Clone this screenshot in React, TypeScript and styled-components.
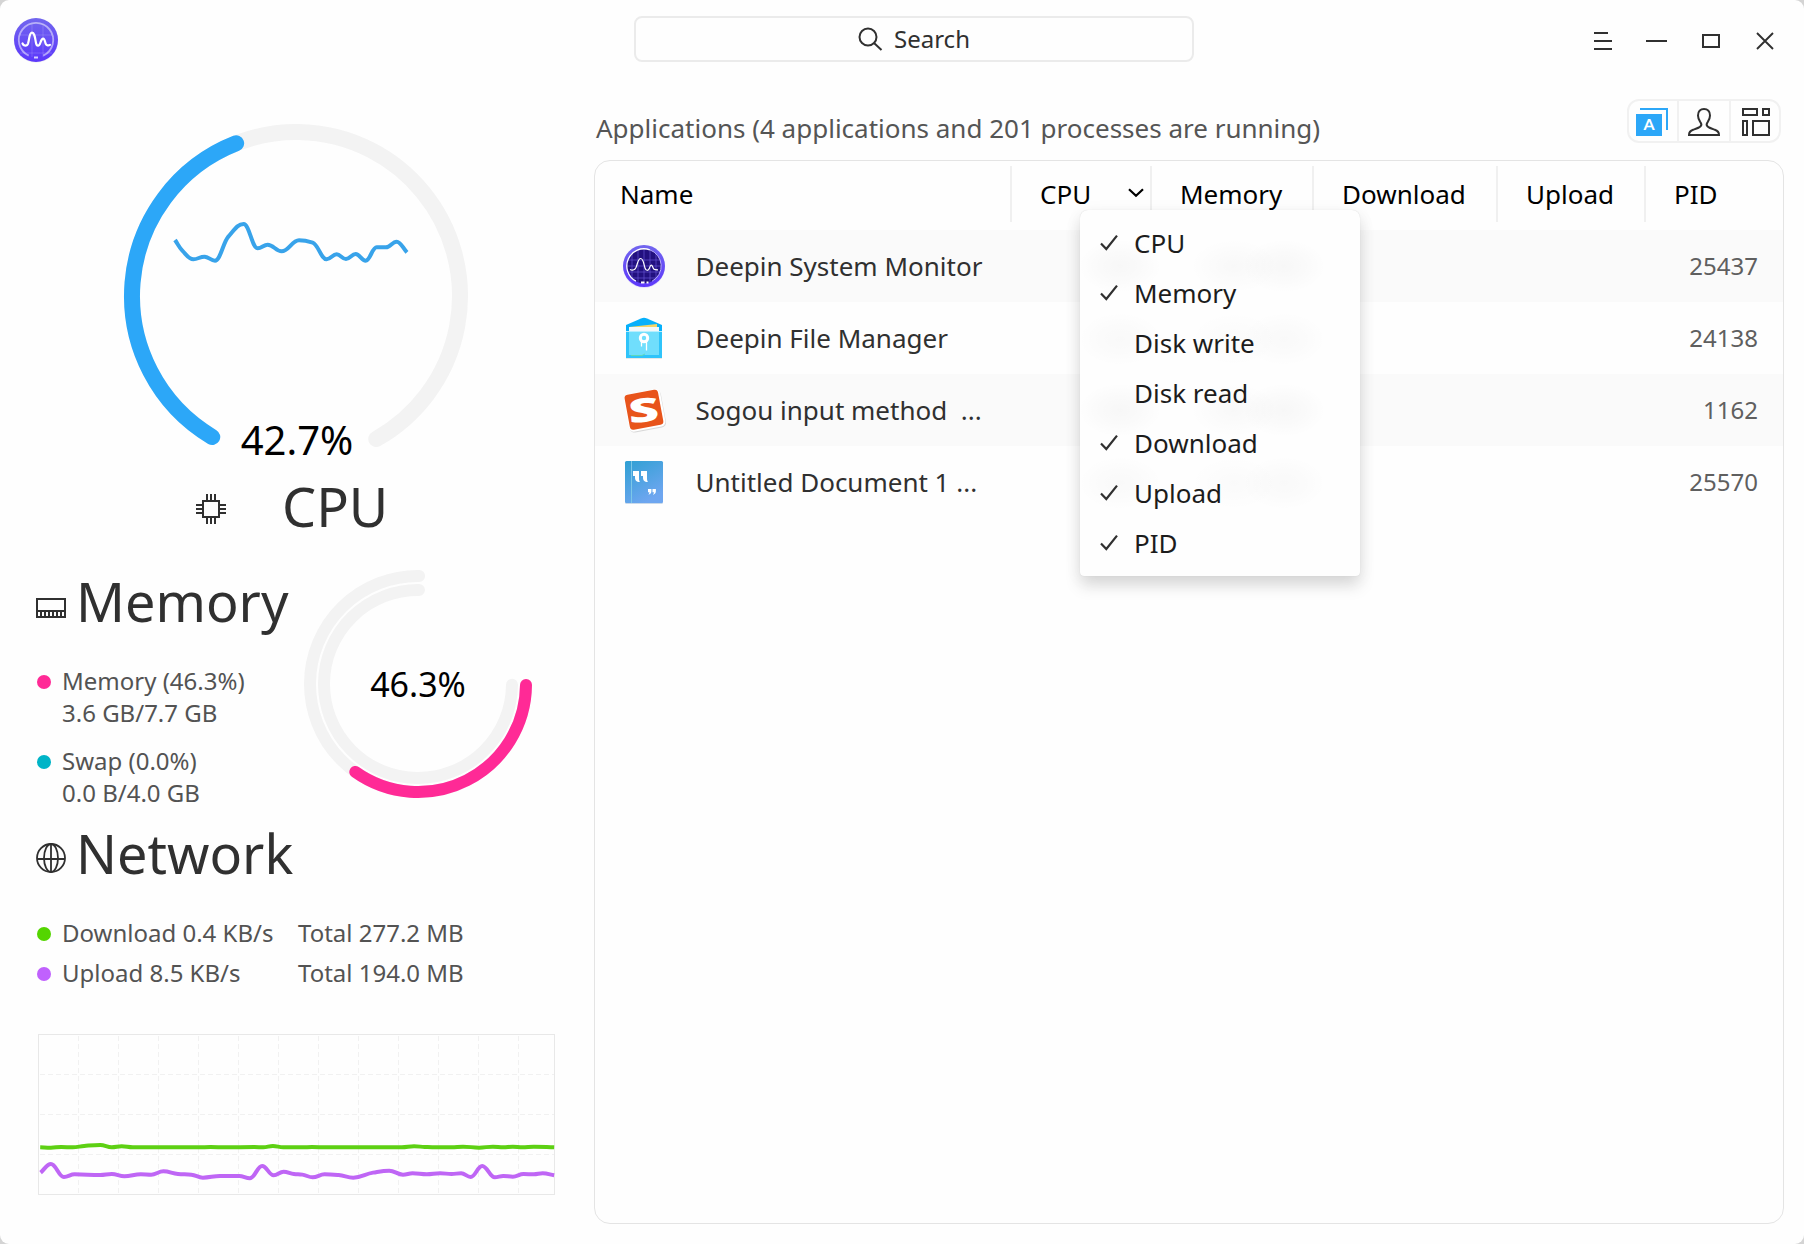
import React from "react";
import styled, { createGlobalStyle } from "styled-components";

const GlobalStyle = createGlobalStyle`
  html, body { margin: 0; padding: 0; background: #d4d4d4; }
  * { box-sizing: border-box; }
  body { font-family: "Noto Sans", "Open Sans", sans-serif; }
  svg { display: block; flex: none; overflow: visible; }
`;

/* ---------- curve helpers ---------- */

type Point = [number, number];

/** Monotone cubic path, so peaks stay on their samples. */
function smoothPath(pts: Point[]): string {
  const n = pts.length;
  const slope: number[] = [];
  for (let i = 0; i < n - 1; i++) {
    slope.push((pts[i + 1][1] - pts[i][1]) / (pts[i + 1][0] - pts[i][0]));
  }
  const tangent = pts.map((_, i) => {
    if (i === 0) return slope[0];
    if (i === n - 1) return slope[n - 2];
    const a = slope[i - 1];
    const b = slope[i];
    return a * b <= 0 ? 0 : (2 * a * b) / (a + b);
  });
  let d = `M${pts[0][0]} ${pts[0][1]}`;
  for (let i = 0; i < n - 1; i++) {
    const h = (pts[i + 1][0] - pts[i][0]) / 2.5;
    d += `C${pts[i][0] + h} ${pts[i][1] + tangent[i] * h} ${pts[i + 1][0] - h} ${
      pts[i + 1][1] - tangent[i + 1] * h
    } ${pts[i + 1][0]} ${pts[i + 1][1]}`;
  }
  return d;
}

/** Clockwise arc, angles in degrees from the positive x axis. */
function arc(cx: number, cy: number, r: number, from: number, to: number): string {
  const at = (a: number) => {
    const t = (a * Math.PI) / 180;
    return `${(cx + r * Math.cos(t)).toFixed(2)} ${(cy + r * Math.sin(t)).toFixed(2)}`;
  };
  return `M${at(from)}A${r} ${r} 0 ${to - from > 180 ? 1 : 0} 1 ${at(to)}`;
}

/* ---------- data ---------- */

const cpuHistory: Point[] = [
  [30, 90], [52, 122], [85, 148], [118, 140], [150, 152], [190, 80], [236, 42], [278, 115], [308, 104],
  [350, 124], [402, 91], [443, 98], [485, 148], [515, 133], [543, 147], [572, 132], [602, 152],
  [635, 112], [663, 112], [695, 95], [726, 127],
].map(([x, y]) => [x / 3 + 41, y / 3 + 86] as Point);

const toChart = ([x, y]: number[]): Point => [x / 2.613 - 38, y / 3 - 33.7];

const uploadHistory: Point[] = [
  [106, 517], [133, 491], [167, 530], [195, 522], [262, 524], [292, 521], [325, 528], [368, 522],
  [395, 523], [427, 513], [465, 521], [500, 523], [530, 532], [575, 527], [625, 527], [653, 534],
  [685, 497], [715, 525], [741, 514], [768, 521], [790, 523], [817, 531], [848, 522], [885, 524],
  [923, 532], [975, 517], [1017, 511], [1053, 523], [1078, 519], [1115, 522], [1150, 519],
  [1180, 521], [1205, 519], [1230, 530], [1260, 497], [1293, 531], [1315, 527], [1340, 529],
  [1368, 521], [1395, 522], [1418, 519], [1448, 525],
].map(toChart);

const downloadHistory: Point[] = [
  [105, 441], [133, 442], [160, 440], [190, 441], [220, 437], [262, 434], [292, 441], [318, 438],
  [347, 441], [520, 441], [550, 440], [590, 441], [665, 440], [688, 441], [713, 437], [740, 441],
  [790, 441], [815, 440], [855, 441], [1050, 441], [1082, 438], [1110, 440], [1140, 441],
  [1180, 441], [1210, 439], [1252, 442], [1288, 439], [1315, 441], [1340, 439], [1365, 441],
  [1395, 439], [1448, 441],
].map(toChart);

/* ---------- window ---------- */

const Window = styled.div`
  position: relative;
  display: flex;
  flex-direction: column;
  width: 1804px;
  height: 1244px;
  overflow: hidden;
  background: #fefefe;
  border-radius: 9px;
`;

const TitleBar = styled.header`
  display: grid;
  grid-template-columns: 634px 560px 1fr;
  align-items: start;
  height: 80px;
  padding-top: 16px;
`;

const LogoSlot = styled.div`
  padding: 0 0 0 12px;
`;

const SearchBox = styled.div`
  display: flex;
  align-items: center;
  justify-content: center;
  gap: 11px;
  height: 46px;
  border: 2px solid #ebebeb;
  border-radius: 8px;
  font-size: 24px;
  line-height: 32px;
  color: #303030;
`;

const WindowControls = styled.div`
  display: flex;
  justify-content: flex-end;
  height: 50px;
  padding-right: 12px;
`;

const ControlButton = styled.button`
  display: flex;
  align-items: center;
  justify-content: center;
  width: 54px;
  height: 50px;
  padding: 0;
  border: 0;
  background: none;
`;

const Body = styled.div`
  display: flex;
  flex: 1;
`;

/* ---------- sidebar ---------- */

const Sidebar = styled.aside`
  display: flex;
  flex-direction: column;
  width: 594px;
  padding-top: 44px;
`;

const Gauge = styled.div<{ $left?: number; $w: number; $h: number }>`
  display: grid;
  width: ${(p) => p.$w}px;
  height: ${(p) => p.$h}px;
  margin-left: ${(p) => p.$left ?? 0}px;
  > * { grid-area: 1 / 1; }
`;

const GaugeValue = styled.span<{ $size: number; $end?: boolean }>`
  place-self: ${(p) => (p.$end ? "end" : "center")} center;
  padding-left: ${(p) => (p.$end ? 2 : 0)}px;
  font-size: ${(p) => p.$size}px;
  line-height: 30px;
  color: #000;
`;

const Heading = styled.h2<{ $left: number; $gap: number; $top: number }>`
  display: flex;
  align-items: center;
  gap: ${(p) => p.$gap}px;
  height: 60px;
  margin: ${(p) => p.$top}px 0 0 ${(p) => p.$left}px;
  font-size: 54px;
  font-weight: 400;
  line-height: 60px;
  color: #303030;
`;

const HeadingIcon = styled.span<{ $drop: number }>`
  display: block;
  margin-top: ${(p) => p.$drop}px;
`;

const MemorySection = styled.section`
  display: flex;
  height: 273px;
`;

const MemoryInfo = styled.div`
  width: 304px;
`;

const MemoryRing = styled.div`
  padding-top: 34px;
`;

const Legend = styled.ul<{ $gap: number }>`
  display: flex;
  flex-direction: column;
  gap: ${(p) => p.$gap}px;
  margin: 34px 0 0;
  padding: 0 0 0 37px;
  list-style: none;
  font-size: 24px;
  line-height: 32px;
  color: #535353;
`;

const LegendItem = styled.li`
  display: flex;
  white-space: nowrap;
`;

const Dot = styled.span<{ $color: string }>`
  flex: none;
  width: 14px;
  height: 14px;
  margin: 10px 11px 0 0;
  border-radius: 50%;
  background: ${(p) => p.$color};
`;

const Rate = styled.span`
  width: 236px;
`;

const ChartSlot = styled.div`
  padding: 45px 0 0 38px;
`;

/* ---------- process table ---------- */

const Content = styled.main`
  display: flex;
  flex-direction: column;
  width: 1190px;
`;

const ContentHeader = styled.div`
  display: flex;
  align-items: flex-start;
  justify-content: space-between;
  height: 80px;
  padding: 19px 3px 0 2px;
`;

const Caption = styled.h1`
  margin: 11px 0 0;
  font-size: 26px;
  font-weight: 400;
  line-height: 36px;
  color: #555;
`;

const ViewSwitch = styled.div`
  display: flex;
  height: 44px;
  border: 2px solid #f1f1f1;
  border-radius: 12px;
`;

const ViewButton = styled.button<{ $w: number; $nudge?: number }>`
  display: flex;
  align-items: center;
  justify-content: flex-start;
  width: ${(p) => p.$w}px;
  padding: 2px 0 0 ${(p) => p.$nudge ?? 9}px;
  border: 0;
  background: none;
  & + & { border-left: 2px solid #f1f1f1; }
`;

const Table = styled.section`
  height: 1064px;
  overflow: hidden;
  border: 1px solid #e4e4e4;
  border-radius: 16px;
`;

const TableHead = styled.div`
  display: grid;
  grid-template-columns: 417px 140px 162px 184px 148px 1fr;
  height: 69px;
  padding-top: 5px;
`;

const HeadCell = styled.div<{ $pad?: number }>`
  display: flex;
  align-items: center;
  justify-content: space-between;
  height: 56px;
  padding: 0 6px 0 ${(p) => p.$pad ?? 28}px;
  border-right: 2px solid #f0f0f0;
  font-size: 26px;
  line-height: 36px;
  color: #000;
  &:last-child { border-right: 0; }
`;

const Row = styled.div`
  display: flex;
  align-items: center;
  height: 72px;
  padding: 0 25px 0 27px;
  &:nth-child(even) { background: #fafafa; }
`;

const AppName = styled.span`
  margin-left: 29.5px;
  font-size: 26px;
  line-height: 36px;
  color: #303030;
  white-space: pre;
`;

const Pid = styled.span`
  margin-left: auto;
  font-size: 24px;
  line-height: 36px;
  color: #5f5f5f;
`;

/* ---------- column menu ---------- */

const smudge = (x: number, y: number, w: number, a: number) =>
  `radial-gradient(ellipse ${w}px 27px at ${x}px ${y}px, rgba(0,0,0,${a}), rgba(0,0,0,${a * 0.6}) 50%, transparent)`;

const smudges = [56, 129, 200, 273]
  .map((y, i) => {
    const a = i % 2 ? 0.019 : 0.027;
    return [smudge(40, y, 42, a), smudge(154, y, 44, a * 0.8), smudge(204, y, 42, a)].join(",");
  })
  .join(",");

const ColumnMenu = styled.ul`
  position: absolute;
  top: 210px;
  left: 1080px;
  width: 280px;
  height: 366px;
  margin: 0;
  padding: 8px 0;
  list-style: none;
  border-radius: 8px 8px 4px 4px;
  background: ${smudges}, #fefefe;
  box-shadow: 0 10px 16px rgba(0, 0, 0, 0.13), 0 3px 18px rgba(0, 0, 0, 0.05), 0 0 1px rgba(0, 0, 0, 0.15);
`;

const MenuItem = styled.li`
  display: flex;
  align-items: center;
  height: 50px;
  padding-left: 20px;
  font-size: 26px;
  line-height: 36px;
  color: #1c1c1c;
`;

const CheckSlot = styled.span`
  width: 34px;
`;

/* ---------- drawings ---------- */

const ink = "#303030";

const Logo = () => (
  <svg width="48" height="48" viewBox="0 0 48 48">
    <defs>
      <linearGradient id="logoFill" x1="0" y1="0" x2="0" y2="1">
        <stop offset="0" stopColor="#7266ee" />
        <stop offset="1" stopColor="#5c37fb" />
      </linearGradient>
    </defs>
    <circle cx="24" cy="24.6" r="22.2" fill="#000" opacity="0.06" />
    <circle cx="24" cy="24" r="22" fill="url(#logoFill)" />
    <path d="M20 8v33M31 8v33M8 19h32M8 37h32" stroke="#fff" strokeOpacity="0.16" fill="none" />
    <path d={arc(24, 24, 17.2, 115, 425)} stroke="#fff" strokeOpacity="0.5" strokeWidth="1.8" fill="none" />
    <path
      d="M10.500 27.500c1 2.600 4.500 3.100 5.600-.2C17.400 23 17.300 16.600 20 16.600s3 5.400 4 10.400c.7 3.600 3.200 3.500 4.300 0 1-3.300 1.700-4.300 2.900-4.300 1.600 0 1.700 3.300 2.600 5.300.7 1.500 2.700 1.800 4.200.8"
      stroke="#fff" strokeWidth="2.200" strokeLinecap="round" fill="none"
    />
    <path d="M22 41.500h4" stroke="#fff" strokeOpacity="0.75" strokeWidth="1.800" />
  </svg>
);

const SearchIcon = () => (
  <svg width="25" height="24" viewBox="0 0 25 24" fill="none" stroke={ink} strokeWidth="2">
    <circle cx="10" cy="10" r="8.500" />
    <path d="M16 16l7.500 7" />
  </svg>
);

const CpuRing = () => (
  <svg width="344" height="330" viewBox="0 0 344 330" fill="none" strokeLinecap="round">
    <path d={arc(172, 172, 164, 121, 420.7)} stroke="#f3f3f3" strokeWidth="16" />
    <path d={arc(172, 172, 164, 120.7, 248.6)} stroke="#2ca7f8" strokeWidth="16" />
    <path d={smoothPath(cpuHistory)} stroke="#38a3ea" strokeWidth="4" strokeLinecap="butt" strokeLinejoin="round" />
  </svg>
);

const MemRing = () => (
  <svg width="228" height="228" viewBox="0 0 228 228" fill="none" strokeWidth="12" strokeLinecap="round">
    <path d={arc(114, 114, 108, 0.5, 270.6)} stroke="#f3f3f3" />
    <path d={arc(114, 114, 94, 0.5, 270.6)} stroke="#f3f3f3" />
    <path d={arc(114, 114, 108, 0.5, 125.5)} stroke="#ff2a96" />
  </svg>
);

const ChipIcon = () => (
  <svg width="30" height="30" viewBox="0 0 30 30" fill="none" stroke={ink} strokeWidth="2">
    <rect x="7" y="7" width="16" height="16" />
    <path d="M11 0v6M15 0v6M19 0v6M11 24v6M15 24v6M19 24v6M0 11h6M0 15h6M0 19h6M24 11h6M24 15h6M24 19h6" />
  </svg>
);

const RamIcon = () => (
  <svg width="30" height="20" viewBox="0 0 30 20" fill="none" stroke={ink} strokeWidth="2">
    <path d="M1 1h28v18H1zM1 13h28M5 13v6M9 13v6M13 13v6M17 13v6M21 13v6M25 13v6" />
  </svg>
);

const GlobeIcon = () => (
  <svg width="30" height="30" viewBox="0 0 30 30" fill="none" stroke={ink} strokeWidth="1.800">
    <circle cx="15" cy="15" r="14" />
    <ellipse cx="15" cy="15" rx="7" ry="14" />
    <path d="M15 1v28M1 16h28" />
  </svg>
);

const NetworkChart = () => (
  <svg width="517" height="161" viewBox="0 0 517 161" fill="none">
    <g stroke="#f1f1f1" strokeDasharray="5 3">
      {Array.from({ length: 12 }, (_, i) => (
        <path key={i} d={`M${40.5 + i * 40} 2V160`} />
      ))}
      {[40.5, 80.5, 120.5].map((y) => (
        <path key={y} d={`M2 ${y}H516`} />
      ))}
    </g>
    <rect x="0.500" y="0.500" width="516" height="160" stroke="#e8e8e8" />
    <path d={smoothPath(downloadHistory)} stroke="#5dd013" strokeWidth="4" />
    <path d={smoothPath(uploadHistory)} stroke="#bf66f5" strokeWidth="4" />
  </svg>
);

const MenuLines = () => (
  <svg width="18" height="18" stroke={ink} strokeWidth="2"><path d="M0 1h14M0 9h18M0 17h18" /></svg>
);
const MinimizeIcon = () => (
  <svg width="22" height="18" stroke={ink} strokeWidth="2"><path d="M0 9h21" /></svg>
);
const MaximizeIcon = () => (
  <svg width="18" height="14" stroke={ink} strokeWidth="2" fill="none"><path d="M1 1h16v12H1z" /></svg>
);
const CloseIcon = () => (
  <svg width="18" height="18" stroke={ink} strokeWidth="1.900"><path d="M1 1l16 16M17 1L1 17" /></svg>
);

const AppsViewIcon = () => (
  <svg width="32" height="28" viewBox="0 0 32 28">
    <path d="M4 1h27v21" fill="none" stroke="#2ca7f8" strokeWidth="2" />
    <rect y="6" width="26" height="22" fill="#2ca7f8" />
    <text x="13" y="22" textAnchor="middle" fontFamily="Lato" fontWeight="700" fontSize="16" fill="#fff">A</text>
  </svg>
);
const UserViewIcon = () => (
  <svg width="32" height="28" viewBox="0 0 32 28" fill="none" stroke={ink} strokeWidth="2">
    <path d="M12.600 18.300c1.300-1.300.9-2.800-.4-4.500C10.700 11.700 10 9.700 10 7.500 10 3.600 12.300 1 16 1s6 2.600 6 6.500c0 2.200-.7 4.200-2.200 6.300-1.300 1.700-1.700 3.200-.4 4.500 1.500 1.600 4.400 2.400 7.400 3.400C29.600 22.600 31 24 31 27H1c0-3 1.400-4.400 4.200-5.300 3-1 5.900-1.800 7.400-3.400z" />
  </svg>
);
const ProcessViewIcon = () => (
  <svg width="28" height="28" viewBox="0 0 28 28" fill="none" stroke={ink} strokeWidth="2">
    <path d="M1 1h14v6H1zM21 1h6v6h-6zM1 13h4v14H1zM11 13h16v14H11z" />
  </svg>
);

const Chevron = () => (
  <svg width="16" height="18" viewBox="0 0 16 18" fill="none" stroke="#000" strokeWidth="2.200">
    <path d="M1 4.200l7 6.600 7-6.600" />
  </svg>
);
const Check = () => (
  <svg width="18" height="18" viewBox="0 0 18 18" fill="none" stroke={ink} strokeWidth="2.200">
    <path d="M1 9.500l5.300 5.500L17 1.600" />
  </svg>
);

const MonitorAppIcon = () => (
  <svg width="44" height="44" viewBox="0 0 44 44">
    <circle cx="22" cy="22.800" r="21" fill="#5c37fb" opacity="0.180" />
    <circle cx="22" cy="22" r="21" fill="url(#logoFill)" />
    <circle cx="22" cy="22" r="17.200" fill="#22107f" />
    <path d="M16 6v32M22 5v34M28 6v32M34 10v24M10 10v24M6 16h32M5 22h34M6 28h32M9 34h26" stroke="#6a58d8" strokeOpacity="0.700" strokeWidth="0.900" />
    <path d={arc(22, 22, 17.2, 118, 290)} stroke="#fff" strokeWidth="1.300" fill="none" />
    <path d={arc(22, 22, 17.2, 290, 422)} stroke="#b9aefc" strokeWidth="1" fill="none" />
    <path d="M8 25.500c2 1 4.600 1 6-2 1.700-4 2-9 4.700-9s3 5.500 4.300 9.500c1 3 3.400 3 4.400.2.700-2 1-3 1.900-3 1.400 0 1.300 3 2.700 4 1 .7 2.500.6 4 .6" stroke="#fff" strokeWidth="1.200" fill="none" />
    <path d="M19 38.500h3.500M24.500 38.500h2" stroke="#fff" strokeWidth="2" />
  </svg>
);
const FileAppIcon = () => (
  <svg width="44" height="44" viewBox="0 0 44 44">
    <rect x="4" y="12" width="36" height="31" fill="#000" opacity="0.090" />
    <path d="M4 9L19 2.500Q22 1.200 25 2.500L40 9v16H4z" fill="#06b0fb" />
    <path d="M7 11l28-3v8H7z" fill="#f4d569" />
    <path d="M7 11h30v8H7z" fill="#f2f8fa" />
    <path d="M4 15h36v27H4z" fill="#2fc4fa" />
    <path d="M7 15h30v24H7z" fill="#70defc" />
    <path d="M4 15.500h36" stroke="#b7effe" />
    <circle cx="22" cy="22" r="3.700" fill="none" stroke="#fff" strokeWidth="3" />
    <path d="M19.500 25v5.500M24.500 25v9.500" stroke="#fff" strokeWidth="1.300" />
    <path d="M9 39.500h11l3-1.500" stroke="#5fd9b8" fill="none" />
  </svg>
);
const SogouAppIcon = () => (
  <svg width="44" height="44" viewBox="0 0 44 44">
    <g transform="rotate(-10.500 22 22)">
      <rect x="4.500" y="4.500" width="37" height="38" rx="5" fill="#000" opacity="0.130" />
      <rect x="4" y="3.500" width="37" height="38" rx="5" fill="#fff" />
      <rect x="5" y="4" width="34" height="35.500" rx="3.500" fill="#e8541b" />
    </g>
    <text transform="translate(22.600 34) rotate(-5) scale(1.600 1)" textAnchor="middle" fontFamily="Open Sans" fontWeight="800" fontSize="33" fill="#fff">S</text>
  </svg>
);
const EditorAppIcon = () => (
  <svg width="44" height="44" viewBox="0 0 44 44">
    <defs>
      <linearGradient id="editorFill" x1="0" y1="0" x2="0.500" y2="1">
        <stop offset="0" stopColor="#2fa0d3" />
        <stop offset="1" stopColor="#6ea6f0" />
      </linearGradient>
    </defs>
    <rect x="3" y="2" width="38" height="42" rx="1.500" fill="#2f6fb0" opacity="0.250" />
    <rect x="3" y="1" width="38" height="42" rx="1.500" fill="url(#editorFill)" />
    <path d="M9.500 1v42" stroke="#7cc8e8" />
    <path d="M11 11h6v7.500c0 2 .5 2.800 1 3.500-4 0-5-2-5-4.500v-1.500h-2zM19 11h6v7.500c0 2 .5 2.800 1 3.500-4 0-5-2-5-4.500v-1.500h-2z" fill="#fff" />
    <path d="M26 29h3.400v2c0 2-1 3.500-3.200 3.800.9-.8 1.200-1.500 1.200-2.500H26zM30.500 29h3.400v2c0 2-1 3.500-3.200 3.800.9-.8 1.200-1.500 1.200-2.500h-1.400z" fill="#fff" />
  </svg>
);

const processes = [
  { name: "Deepin System Monitor", pid: 25437, Icon: MonitorAppIcon },
  { name: "Deepin File Manager", pid: 24138, Icon: FileAppIcon },
  { name: "Sogou input method  ...", pid: 1162, Icon: SogouAppIcon },
  { name: "Untitled Document 1 ...", pid: 25570, Icon: EditorAppIcon },
];

const columns = [
  { label: "CPU", shown: true },
  { label: "Memory", shown: true },
  { label: "Disk write", shown: false },
  { label: "Disk read", shown: false },
  { label: "Download", shown: true },
  { label: "Upload", shown: true },
  { label: "PID", shown: true },
];

export default function App() {
  return (
    <>
      <GlobalStyle />
      <Window>
        <TitleBar>
          <LogoSlot><Logo /></LogoSlot>
          <SearchBox><SearchIcon />Search</SearchBox>
          <WindowControls>
            <ControlButton aria-label="Menu"><MenuLines /></ControlButton>
            <ControlButton aria-label="Minimize"><MinimizeIcon /></ControlButton>
            <ControlButton aria-label="Maximize"><MaximizeIcon /></ControlButton>
            <ControlButton aria-label="Close"><CloseIcon /></ControlButton>
          </WindowControls>
        </TitleBar>
        <Body>
          <Sidebar>
            <Gauge $left={124} $w={344} $h={331}>
              <CpuRing />
              <GaugeValue $size={40} $end>42.7%</GaugeValue>
            </Gauge>
            <Heading $left={196} $gap={56} $top={21}>
              <HeadingIcon $drop={6}><ChipIcon /></HeadingIcon>
              CPU
            </Heading>
            <MemorySection>
              <MemoryInfo>
                <Heading $left={36} $gap={10} $top={35}>
                  <HeadingIcon $drop={14}><RamIcon /></HeadingIcon>
                  Memory
                </Heading>
                <Legend $gap={16}>
                  <LegendItem><Dot $color="#ff2a96" /><span>Memory (46.3%)<br />3.6 GB/7.7 GB</span></LegendItem>
                  <LegendItem><Dot $color="#00b4c7" /><span>Swap (0.0%)<br />0.0 B/4.0 GB</span></LegendItem>
                </Legend>
              </MemoryInfo>
              <MemoryRing>
                <Gauge $w={228} $h={228}>
                  <MemRing />
                  <GaugeValue $size={34}>46.3%</GaugeValue>
                </Gauge>
              </MemoryRing>
            </MemorySection>
            <Heading $left={36} $gap={10} $top={14}>
              <HeadingIcon $drop={10}><GlobeIcon /></HeadingIcon>
              Network
            </Heading>
            <Legend $gap={8}>
              <LegendItem><Dot $color="#54d500" /><Rate>Download 0.4 KB/s</Rate><span>Total 277.2 MB</span></LegendItem>
              <LegendItem><Dot $color="#c061fd" /><Rate>Upload 8.5 KB/s</Rate><span>Total 194.0 MB</span></LegendItem>
            </Legend>
            <ChartSlot><NetworkChart /></ChartSlot>
          </Sidebar>
          <Content>
            <ContentHeader>
              <Caption>Applications (4 applications and 201 processes are running)</Caption>
              <ViewSwitch>
                <ViewButton $w={48} $nudge={7} aria-label="Applications"><AppsViewIcon /></ViewButton>
                <ViewButton $w={52} aria-label="My processes"><UserViewIcon /></ViewButton>
                <ViewButton $w={50} $nudge={11} aria-label="All processes"><ProcessViewIcon /></ViewButton>
              </ViewSwitch>
            </ContentHeader>
            <Table>
              <TableHead>
                <HeadCell $pad={25}>Name</HeadCell>
                <HeadCell>CPU<Chevron /></HeadCell>
                <HeadCell>Memory</HeadCell>
                <HeadCell>Download</HeadCell>
                <HeadCell>Upload</HeadCell>
                <HeadCell>PID</HeadCell>
              </TableHead>
              {processes.map(({ name, pid, Icon }) => (
                <Row key={pid}>
                  <Icon />
                  <AppName>{name}</AppName>
                  <Pid>{pid}</Pid>
                </Row>
              ))}
            </Table>
          </Content>
        </Body>
        <ColumnMenu>
          {columns.map((c) => (
            <MenuItem key={c.label}>
              <CheckSlot>{c.shown && <Check />}</CheckSlot>
              {c.label}
            </MenuItem>
          ))}
        </ColumnMenu>
      </Window>
    </>
  );
}
